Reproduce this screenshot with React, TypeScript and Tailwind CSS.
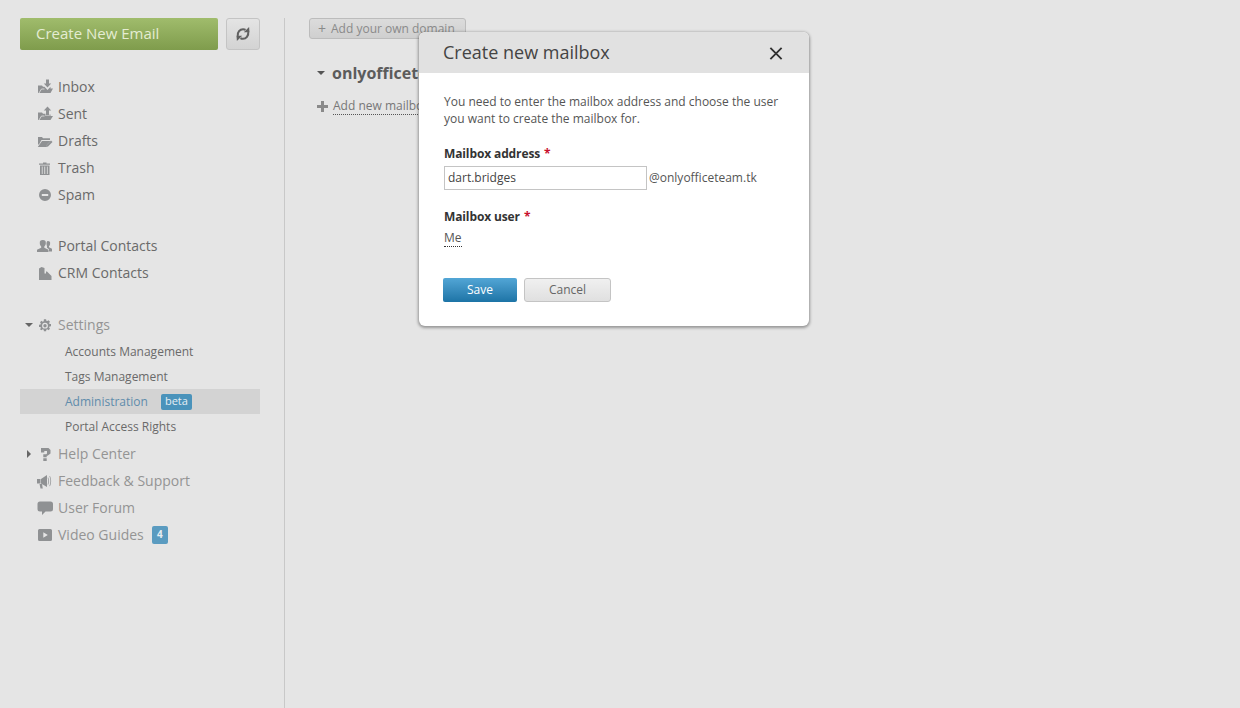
import React from "react";

const I = "w-[16px] h-[16px] fill-[#8f9193] shrink-0 mt-[1px]";

const icons: Record<string, React.ReactNode> = {
  inbox: <svg viewBox="0 0 16 16" className={I}><path d="M1 14V6.500h4l1 1.200h1.500l3 3.300 3-3.300v1.800H16L13.500 14z" /><path d="M2 14l2.500-4h3" stroke="#e5e5e5" strokeWidth=".8" fill="none" /><path d="M9 .5h3v4h2.200l-3.700 4-3.700-4H9z" /></svg>,
  sent: <svg viewBox="0 0 16 16" className={I}><path d="M1 14V6.500h4l1 1.200h2.500v2.300h4V8.500h1V10H16L13.500 14z" /><path d="M2 14l2.500-4h3" stroke="#e5e5e5" strokeWidth=".8" fill="none" /><path d="M10.500 .5l3.700 4H12v5H9v-5H6.800z" /></svg>,
  drafts: <svg viewBox="0 0 16 16" className={I}><path d="M1 4h4l1 1.200h7V7H4.500L2 11.500H1z" /><path d="M5 8h8.500L10 11.500 9.300 14H.8z" /><path d="M14 7.500l1.500 1.500-4.500 4.500-2 .6.600-2z" /></svg>,
  trash: <svg viewBox="0 0 16 16" className={I}><path d="M6 2.500h3.500v1H13v1.200H2V3.500h4z" /><path d="M3 5.500h9.500V15H3zM4.800 6.500v7.500h.8V6.500zm2.500 0v7.500h.9V6.500zm2.600 0v7.500h.8V6.500z" fillRule="evenodd" /></svg>,
  spam: <svg viewBox="0 0 16 16" className={I}><path d="M8 2a6 6 0 1 0 0 12A6 6 0 0 0 8 2zM4.800 7h6.400v2H4.800z" fillRule="evenodd" /></svg>,
  portal: <svg viewBox="0 0 16 16" className={I}><path d="M10.800 3a2.300 2.300 0 0 1 2.300 2.700c0 1.100-.5 2-1.100 2.500v1l3 1.500V13.500h-3V11.200L10 9.800V8.300C9.700 7.500 9.500 6.500 9.500 5.500c0-1 .4-2.500 1.300-2.500z" /><path d="M5.800 2a3 3 0 0 1 3 3.300c0 1.300-.6 2.500-1.500 3.200v1.200l4.200 2.100v2.200H0v-2.200l4.200-2.100V8.500C3.300 7.800 2.800 6.600 2.800 5.300A3 3 0 0 1 5.800 2z" /></svg>,
  crm: <svg viewBox="0 0 16 16" className={I}><path d="M2 15V3.500L4.500 2 7.500 3v5.500h1.500V6.500h1L14.500 11v4z" /></svg>,
  gear: <svg viewBox="0 0 16 16" className={I}><path d="M6.900 2.200h2.200l.2 1.500 1 .4 1.200-.9 1.500 1.500-.9 1.200.4 1 1.500.2v2.200l-1.500.2-.4 1 .9 1.200-1.500 1.500-1.200-.9-1 .4-.2 1.500H6.900l-.2-1.500-1-.4-1.200.9L3 12.300l.9-1.200-.4-1L2 9.900V7.700l1.500-.2.400-1L3 5.300l1.500-1.500 1.200.9 1-.4zM8 5.800a2.900 2.900 0 1 0 0 5.800 2.900 2.900 0 0 0 0-5.800zM8 7a1.700 1.700 0 1 1 0 3.400A1.700 1.700 0 0 1 8 7z" fillRule="evenodd" /></svg>,
  help: <svg viewBox="0 0 16 16" className={I}><path d="M4 2h7.500L13.500 4v3.500L10.500 9.800H9.700V11.200H6.300V8.200H9.300L10 7.500V5H7.300V6.500H4zM6.300 12.300h3.400V15H6.300z" /></svg>,
  feedback: <svg viewBox="0 0 16 16" className={I}><path d="M0 6h3.500v4.500H0z" /><path d="M4 6l6-4v12L4 10.500z" /><path d="M2.500 11H5l.8 4.500H3.500z" /><path d="M11.200 4.500c1 2.200 1 5 0 7.200l-.6-.3c.9-2 .9-4.600 0-6.600zM13 3c1.500 3 1.500 7.200 0 10.200l-.6-.3c1.400-2.800 1.400-6.800 0-9.600z" /></svg>,
  forum: <svg viewBox="0 0 16 16" className={I}><path d="M3 1.500h10.500A2.500 2.500 0 0 1 16 4v5a2.500 2.500 0 0 1-2.500 2.500H8.500L5 15v-3.500H3A2.500 2.500 0 0 1 .5 9V4A2.500 2.500 0 0 1 3 1.500z" /></svg>,
  video: <svg viewBox="0 0 16 16" className={I}><path d="M2.500 2h11A1.500 1.500 0 0 1 15 3.500v9a1.500 1.500 0 0 1-1.500 1.500h-11A1.500 1.500 0 0 1 1 12.500v-9A1.500 1.500 0 0 1 2.500 2zM6.300 5.200v5.600L10.800 8z" fillRule="evenodd" /></svg>,
};

function NavRow({ icon, label, muted, caret, badge }: { icon: string; label: string; muted?: boolean; caret?: "down" | "right"; badge?: string }) {
  return (
    <div className={`relative flex h-[27px] items-center pl-[17px] text-[14px] ${muted ? "text-[#949494]" : "text-[#6a6a6a]"}`}>
      {caret === "down" && <span className="absolute left-[5px] top-[12px] h-0 w-0 border-x-[4px] border-t-[4px] border-x-transparent border-t-[#666666]" />}
      {caret === "right" && <span className="absolute left-[7px] top-[10px] h-0 w-0 border-y-[4px] border-l-[4px] border-y-transparent border-l-[#666666]" />}
      {icons[icon]}
      <span className="ml-[5px]">{label}</span>
      {badge && <span className="ml-[8px] flex h-[18px] w-[16px] items-center justify-center rounded-[2px] bg-[#5a9bc0] text-[10px] font-bold text-[#e8eef2]">{badge}</span>}
    </div>
  );
}

function SubRow({ label, active, badge }: { label: string; active?: boolean; badge?: string }) {
  return (
    <div className={`flex h-[25px] items-center pl-[45px] text-[12px] ${active ? "bg-[#d3d3d3] text-[#5f8cab]" : "text-[#6a6a6a]"}`}>
      <span>{label}</span>
      {badge && <span className="ml-[13px] flex h-[16px] w-[31px] items-center justify-center rounded-[2px] bg-[#4a93bb] text-[11px] text-[#e6eef3]">{badge}</span>}
    </div>
  );
}

export default function App() {
  return (
    <div className="flex h-[708px] w-[1240px] overflow-hidden bg-[#e5e5e5] font-['Open_Sans',sans-serif]">
      <aside className="relative w-[285px] shrink-0 pl-[20px] pr-[25px] pt-[18px]">
        <div className="flex gap-[8px]">
          <div className="flex h-[32px] w-[198px] items-center rounded-[2px] bg-gradient-to-b from-[#a0bc6c] to-[#7f9c4c] pb-[1px] pl-[16px] text-[15px] text-[#e4ecd2]">Create New Email</div>
          <div className="flex h-[32px] w-[34px] items-center justify-center rounded-[3px] border border-[#c4c4c4] bg-gradient-to-b from-[#e4e4e4] to-[#d3d3d3]">
            <svg viewBox="0 0 16 16" className="h-[16px] w-[16px]" fill="none" stroke="#606060" strokeWidth="2.100">
              <path d="M2.800 10C2.200 6 5 3.200 8 3.200c1 0 1.800.2 2.500.7" />
              <path d="M13.200 6c.6 4-2.200 6.800-5.200 6.800-1 0-1.800-.2-2.500-.7" />
              <path d="M8.800 6.200h5.700l-.4-5.200z" fill="#606060" stroke="none" />
              <path d="M7.200 9.800H1.500l.4 5.200z" fill="#606060" stroke="none" />
            </svg>
          </div>
        </div>
        <div className="mt-[23px]">
          <NavRow icon="inbox" label="Inbox" />
          <NavRow icon="sent" label="Sent" />
          <NavRow icon="drafts" label="Drafts" />
          <NavRow icon="trash" label="Trash" />
          <NavRow icon="spam" label="Spam" />
        </div>
        <div className="mt-[24px]">
          <NavRow icon="portal" label="Portal Contacts" />
          <NavRow icon="crm" label="CRM Contacts" />
        </div>
        <div className="mt-[25px]">
          <NavRow icon="gear" label="Settings" muted caret="down" />
          <div className="mt-[1px]">
            <SubRow label="Accounts Management" />
            <SubRow label="Tags Management" />
            <SubRow label="Administration" active badge="beta" />
            <SubRow label="Portal Access Rights" />
          </div>
        </div>
        <div className="mt-[1px]">
          <NavRow icon="help" label="Help Center" muted caret="right" />
          <NavRow icon="feedback" label="Feedback &amp; Support" muted />
          <NavRow icon="forum" label="User Forum" muted />
          <NavRow icon="video" label="Video Guides" muted badge="4" />
        </div>
        <div className="absolute bottom-0 right-0 top-[18px] w-px bg-[#c8c8c8]" />
      </aside>

      <main className="flex-1 pl-[24px] pt-[18px]">
        <div className="flex h-[21px] w-[157px] items-center rounded-[3px] border border-[#bcbcbc] bg-gradient-to-b from-[#dcdcdc] to-[#cfcfcf] pl-[8px] text-[12px] text-[#8a8a8a]">
          <span className="mr-[5px] text-[14px] leading-none">+</span>Add your own domain
        </div>
        <div className="mt-[22px] flex items-center">
          <span className="ml-[8px] h-0 w-0 border-x-[4px] border-t-[4px] border-x-transparent border-t-[#555555]" />
          <span className="ml-[7px] text-[16px] font-bold text-[#5c5c5c]">onlyofficeteam.tk</span>
        </div>
        <div className="ml-[8px] mt-[13px] flex items-center text-[12px] text-[#777777]">
          <svg viewBox="0 0 11 11" className="h-[11px] w-[11px] fill-[#8a8a8a]"><path d="M4 0h3v4h4v3H7v4H4V7H0V4h4z" /></svg>
          <span className="ml-[5px] border-b border-dotted border-[#555555] leading-[16px]">Add new mailbox</span>
        </div>
      </main>

      <div className="absolute left-[419px] top-[32px] h-[294px] w-[390px] overflow-hidden rounded-[6px] bg-white shadow-[0_1px_3px_1px_rgba(0,0,0,0.35)]">
        <div className="flex h-[41px] items-center justify-between bg-[#e1e1e1] pl-[24px] pr-[26px]">
          <span className="text-[18px] text-[#444444]">Create new mailbox</span>
          <svg viewBox="0 0 12 12" className="mt-[1px] h-[13px] w-[14px]" fill="none" stroke="#333333" strokeWidth="1.700"><path d="M.8 .8l10.400 10.400M11.200 .8L.8 11.200" /></svg>
        </div>
        <div className="px-[25px] pt-[20px] text-[12px] text-[#555555]">
          <p className="leading-[17px]">You need to enter the mailbox address and choose the user<br />you want to create the mailbox for.</p>
          <div className="mt-[18px] font-bold leading-[17px] tracking-[-0.01em] text-[#333333]">Mailbox address <span className="ml-[1px] text-[#c8102e]">*</span></div>
          <div className="mt-[4px] flex items-center">
            <div className="flex h-[24px] w-[203px] items-center border border-[#c4c4c4] pl-[3px] text-[#444444]">dart.bridges</div>
            <span className="ml-[2px]">@onlyofficeteam.tk</span>
          </div>
          <div className="mt-[18px] font-bold leading-[17px] tracking-[-0.01em] text-[#333333]">Mailbox user <span className="ml-[1px] text-[#c8102e]">*</span></div>
          <div className="mt-[4px]"><span className="inline-block border-b border-dotted border-[#333333] leading-[16px]">Me</span></div>
          <div className="-ml-px mt-[31px] flex gap-[7px]">
            <div className="flex h-[24px] w-[74px] items-center justify-center rounded-[2px] bg-gradient-to-b from-[#52a6d6] to-[#1c74a6] text-white">Save</div>
            <div className="flex h-[24px] w-[87px] items-center justify-center rounded-[3px] border border-[#c4c4c4] bg-gradient-to-b from-[#f0f0f0] to-[#e0e0e0] text-[#666666]">Cancel</div>
          </div>
        </div>
      </div>
    </div>
  );
}
